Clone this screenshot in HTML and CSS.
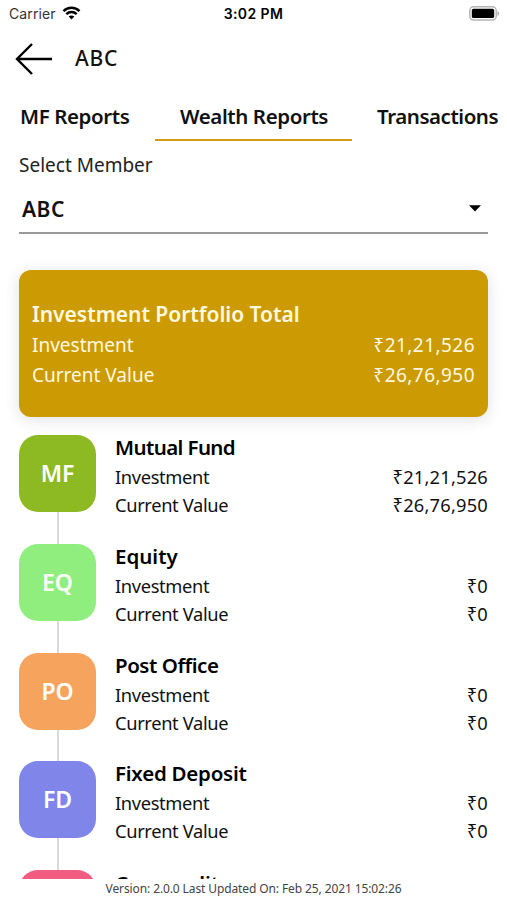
FILE: index.html
```
<!DOCTYPE html>
<html lang="en">
<head>
<meta charset="utf-8">
<title>Wealth Reports</title>
<link rel="stylesheet" href="styles.css">
</head>
<body>
<div class="status">
  <div class="carrier"><span>Carrier</span>
    <svg width="19" height="14" viewBox="0 0 18 14" fill="none" stroke="#000" stroke-width="2.5"><path d="M1 5.1C5.5.7 12.5.7 17 5.1"/><path d="M3.8 8.1c3-2.8 7.4-2.8 10.4 0"/><path d="M9 13.4 6.2 10.6c1.6-1.4 4-1.4 5.6 0z" fill="#000" stroke="none"/></svg>
  </div>
  <time>3:02 PM</time>
  <svg class="battery" width="31" height="15" viewBox="0 0 31 15"><rect x=".8" y=".8" width="26.4" height="13.2" rx="3.8" fill="#fff" stroke="#b5b5b5" stroke-width="1.5"/><rect x="2.8" y="2.8" width="22.4" height="9.3" rx="1.7"/><path d="M28.5 5c2.2.7 2.2 4.2 0 5z" fill="#aaa"/></svg>
</div>
<header class="header">
  <svg width="38" height="32" viewBox="0 0 38 32" fill="none" stroke="#000" stroke-width="2.4"><path d="M17 1 2 16l15 15M2 16h35"/></svg>
  <h1>ABC</h1>
</header>
<nav class="tabs"><a class="tab first">MF Reports</a><a class="tab active">Wealth Reports</a><a class="tab last">Transactions</a></nav>
<main class="content">
  <div class="label"><span>Select Member</span></div>
  <div class="select"><span>ABC</span><svg width="12" height="7" viewBox="0 0 12 7"><path d="M0 .3h12L6 6.6z"/></svg></div>
  <section class="card">
    <h2>Investment Portfolio Total</h2>
    <div class="row"><span>Investment</span><b>₹21,21,526</b></div>
    <div class="row"><span>Current Value</span><b>₹26,76,950</b></div>
  </section>
  <ul class="list">
    <li><div class="tile mf">MF</div><div class="info"><h3 class="t-mf">Mutual Fund</h3><div class="row"><span>Investment</span><b>₹21,21,526</b></div><div class="row"><span>Current Value</span><b>₹26,76,950</b></div></div></li>
    <li><div class="tile eq">EQ</div><div class="info"><h3 class="t-eq">Equity</h3><div class="row"><span>Investment</span><b>₹0</b></div><div class="row"><span>Current Value</span><b>₹0</b></div></div></li>
    <li><div class="tile po">PO</div><div class="info"><h3 class="t-po">Post Office</h3><div class="row"><span>Investment</span><b>₹0</b></div><div class="row"><span>Current Value</span><b>₹0</b></div></div></li>
    <li><div class="tile fd">FD</div><div class="info"><h3 class="t-fd">Fixed Deposit</h3><div class="row"><span>Investment</span><b>₹0</b></div><div class="row"><span>Current Value</span><b>₹0</b></div></div></li>
    <li><div class="tile co"></div><div class="info"><h3 class="t-co">Commodity</h3></div></li>
  </ul>
</main>
<footer class="footer"><span>Version: 2.0.0 Last Updated On: Feb 25, 2021 15:02:26</span></footer>
</body>
</html>
```
FILE: styles.css
```
* { box-sizing: border-box; }
body {
  margin: 0;
  width: 507px;
  height: 900px;
  overflow: hidden;
  display: flex;
  flex-direction: column;
  background: #fff;
  color: #111;
  font-family: "Noto Sans", sans-serif;
}
h1, h2, h3, ul { margin: 0; padding: 0; }
.status {
  flex: none;
  height: 28px;
  display: grid;
  grid-template-columns: 1fr auto 1fr;
  align-items: center;
  padding: 0 7px 0 9px;
  font: 14px/28px Inter, sans-serif;
}
.carrier { display: flex; gap: 6px; align-items: center; color: #333; letter-spacing: .1px; }
.carrier svg { margin-top: -2px; }
.status time { font-weight: 600; font-size: 14px; letter-spacing: .4px; color: #000; margin-left: -2px; }
.battery { justify-self: end; margin-top: -2px; }
.header {
  flex: none;
  height: 62px;
  display: flex;
  align-items: center;
  gap: 22px;
  padding-left: 15px;
}
.header h1 { font-size: 21px; line-height: 30px; margin-top: -2px; font-weight: 500; letter-spacing: .7px; }
.tabs {
  flex: none;
  height: 51px;
  display: flex;
  white-space: nowrap;
  font-size: 20.5px;
  line-height: 53px;
  font-weight: 600;
}
.tab { height: 51px; letter-spacing: -.4px; }
.first { width: 155px; padding-left: 20px; }
.active { width: 197px; padding-left: 25px; border-bottom: 2px solid #cf9c13; }
.last { padding-left: 25px; letter-spacing: -.45px; }
.content { height: 738px; overflow: hidden; padding: 0 19px; }
.label { height: 47px; line-height: 48px; font-size: 19px; color: #222; }
.select {
  height: 46px;
  display: flex;
  align-items: center;
  justify-content: space-between;
  padding: 0 7px 4px 3px;
  border-bottom: 2px solid #999;
  font-size: 21px;
  font-weight: 600;
  letter-spacing: .5px;
}
.select span { padding-top: 2px; }
.card {
  height: 147px;
  margin-top: 36px;
  padding: 28px 13px;
  border-radius: 12px;
  background: #cc9b04;
  box-shadow: 0 3px 15px rgba(50, 50, 80, .14);
  color: #fff8df;
}
.card h2 { font-size: 21px; line-height: 32px; font-weight: 600; letter-spacing: -.03px; }
.row { display: flex; justify-content: space-between; white-space: nowrap; }
.row b { font-weight: 400; }
.card .row { font-size: 19px; line-height: 30px; }
.card .row b { letter-spacing: .45px; }
.list { list-style: none; margin-top: 18px; }
.list li { display: flex; gap: 19px; height: 108.75px; }
.list li::before {
  content: "";
  width: 2px;
  height: 108px;
  margin: 10px -59px 0 38px;
  background: #d9d9d9;
}
.tile {
  position: relative;
  flex: none;
  width: 77px;
  height: 77px;
  border-radius: 19px;
  color: #fff;
  font-size: 23px;
  line-height: 77px;
  font-weight: 600;
  text-align: center;
}
.mf { background: #8dba22; }
.eq { background: #90ee7f; }
.po { background: #f6a35e; }
.fd { background: #8085e9; }
.co { background: #f15c80; }
.info { flex: 1; }
.info h3 { font-size: 20.5px; line-height: 24px; height: 28px; font-weight: 600; color: #000; }
.t-mf { letter-spacing: -.6px; }
.t-po { letter-spacing: -.45px; }
.t-fd { letter-spacing: -.25px; }
.info .t-co { letter-spacing: -.1px; line-height: 26px; }
.info .row { font-size: 18.3px; line-height: 28px; }
.info .row span { letter-spacing: -.35px; }
.info .row b { letter-spacing: .2px; }
.footer {
  flex: none;
  height: 21px;
  text-align: center;
  font-size: 12px;
  line-height: 20px;
  letter-spacing: -.11px;
  color: #444;
}
```
